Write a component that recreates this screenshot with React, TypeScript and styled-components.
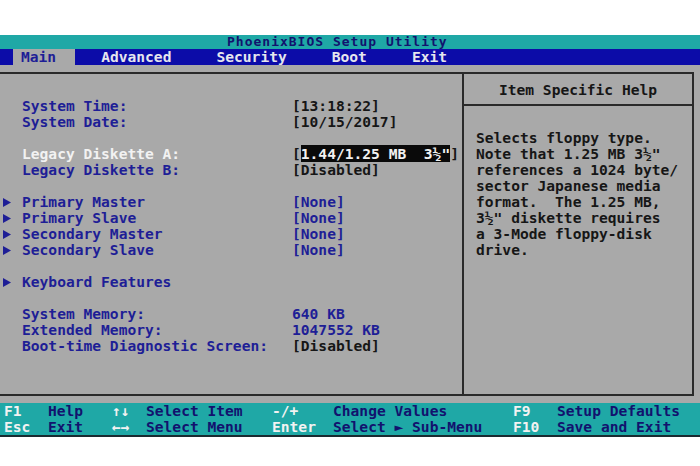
import React from 'react';
import styled, { createGlobalStyle } from 'styled-components';

const colors = {
  teal: '#1fa8a6',
  blue: '#0c0ca8',
  gray: '#a9a9a9',
  line: '#2a2a2a',
  label: '#1e1e96',
  white: '#f2f2f2',
  black: '#161616',
  title: '#12126e',
};

type Tone = 'black' | 'blue';

interface Item {
  label: string;
  value?: string;
  tone?: Tone;
  sub?: boolean;
  selected?: boolean;
}

const items: (Item | null)[] = [
  { label: 'System Time:', value: '[13:18:22]', tone: 'black' },
  { label: 'System Date:', value: '[10/15/2017]', tone: 'black' },
  null,
  { label: 'Legacy Diskette A:', selected: true },
  { label: 'Legacy Diskette B:', value: '[Disabled]', tone: 'black' },
  null,
  { label: 'Primary Master', value: '[None]', tone: 'blue', sub: true },
  { label: 'Primary Slave', value: '[None]', tone: 'blue', sub: true },
  { label: 'Secondary Master', value: '[None]', tone: 'blue', sub: true },
  { label: 'Secondary Slave', value: '[None]', tone: 'blue', sub: true },
  null,
  { label: 'Keyboard Features', sub: true },
  null,
  { label: 'System Memory:', value: '640 KB', tone: 'blue' },
  { label: 'Extended Memory:', value: '1047552 KB', tone: 'blue' },
  { label: 'Boot-time Diagnostic Screen:', value: '[Disabled]', tone: 'black' },
];

const tabs = ['Main', 'Advanced', 'Security', 'Boot', 'Exit'];

const helpLines = [
  'Selects floppy type.',
  'Note that 1.25 MB 3½"',
  'references a 1024 byte/',
  'sector Japanese media',
  'format.  The 1.25 MB,',
  '3½" diskette requires',
  'a 3-Mode floppy-disk',
  'drive.',
];

const keyRows = [
  ['F1', 'Help', '↑↓', 'Select Item', '-/+', 'Change Values', 'F9', 'Setup Defaults'],
  ['Esc', 'Exit', '←→', 'Select Menu', 'Enter', 'Select ► Sub-Menu', 'F10', 'Save and Exit'],
];

const SubArrow: React.FC = () => (
  <svg width="8" height="9" viewBox="0 0 8 9">
    <polygon points="0,0 8,4.5 0,9" fill={colors.label} />
  </svg>
);

const App: React.FC = () => {
  return (
    <Page>
      <GlobalStyle />
      <TitleBar>PhoenixBIOS Setup Utility</TitleBar>
      <MenuBar>
        {tabs.map((t, i) => (
          <MenuTab key={t} $active={i === 0}>{t}</MenuTab>
        ))}
      </MenuBar>
      <Body>
        <Frame>
          <LeftPanel>
            {items.map((item, i) =>
              item ? (
                <Row key={i}>
                  <Arrow>{item.sub && <SubArrow />}</Arrow>
                  <Label $selected={item.selected}>{item.label}</Label>
                  {item.selected ? (
                    <Value $tone="black">
                      [<Highlight>1.44/1.25 MB  3½"</Highlight>]
                    </Value>
                  ) : (
                    <Value $tone={item.tone ?? 'black'}>{item.value}</Value>
                  )}
                </Row>
              ) : (
                <Row key={i} />
              )
            )}
          </LeftPanel>
          <RightPanel>
            <HelpHeader>Item Specific Help</HelpHeader>
            <HelpText>
              {helpLines.map((l) => (
                <HelpLine key={l}>{l}</HelpLine>
              ))}
            </HelpText>
          </RightPanel>
        </Frame>
      </Body>
      <KeyBar>
        {keyRows.map((r) =>
          r.map((cell, j) => (
            <KeyCell key={r[0] + j} $key={j % 2 === 0}>
              {cell}
            </KeyCell>
          ))
        )}
      </KeyBar>
    </Page>
  );
};

const GlobalStyle = createGlobalStyle`
  html, body {
    margin: 0;
    padding: 0;
    background: #ffffff;
  }
  body {
    font-family: "DejaVu Sans Mono", "Liberation Mono", monospace;
    font-size: 14.6px;
    font-weight: 700;
  }
`;

const Page = styled.div`
  width: 700px;
  padding-top: 35px;
`;

const TitleBar = styled.div`
  height: 14px;
  line-height: 14px;
  font-size: 13px;
  letter-spacing: 1px;
  padding-left: 227px;
  background: ${colors.teal};
  color: ${colors.title};
  white-space: pre;
`;

const MenuBar = styled.div`
  display: flex;
  gap: 18px;
  height: 16px;
  padding-left: 13px;
  background: ${colors.blue};
`;

const MenuTab = styled.div<{ $active?: boolean }>`
  padding: 0 19px 0 8px;
  line-height: 16px;
  background: ${({ $active }) => ($active ? colors.gray : 'transparent')};
  color: ${({ $active }) => ($active ? colors.label : '#e6e6ee')};
`;

const Body = styled.div`
  background: ${colors.gray};
  padding: 7px 6px 7px 0;
`;

const Frame = styled.div`
  display: flex;
  height: 324px;
  box-sizing: border-box;
  border: 2px solid ${colors.line};
  border-left: none;
`;

const LeftPanel = styled.div`
  width: 462px;
  padding-top: 24px;
  border-right: 2px solid ${colors.line};
`;

const Row = styled.div`
  display: grid;
  grid-template-columns: 19px 270px 1fr;
  height: 16px;
  line-height: 16px;
  padding-left: 3px;
  white-space: pre;
`;

const Arrow = styled.span`
  display: flex;
  align-items: center;
`;

const Label = styled.span<{ $selected?: boolean }>`
  color: ${({ $selected }) => ($selected ? colors.white : colors.label)};
`;

const Value = styled.span<{ $tone: Tone }>`
  color: ${({ $tone }) => ($tone === 'blue' ? colors.label : colors.black)};
`;

const Highlight = styled.span`
  background: #0a0a0a;
  color: ${colors.white};
`;

const RightPanel = styled.div`
  flex: 1;
  display: flex;
  flex-direction: column;
`;

const HelpHeader = styled.div`
  height: 22px;
  padding-top: 8px;
  line-height: 16px;
  text-align: center;
  color: ${colors.black};
  border-bottom: 2px solid ${colors.line};
`;

const HelpText = styled.div`
  padding: 24px 0 0 12px;
  color: ${colors.black};
`;

const HelpLine = styled.div`
  height: 16px;
  line-height: 16px;
  white-space: pre;
`;

const KeyBar = styled.div`
  display: grid;
  grid-template-columns: 44px 64px 34px 126px 61px 180px 44px 1fr;
  grid-auto-rows: 16px;
  padding-left: 4px;
  background: ${colors.teal};
  border-bottom: 2px solid #1a2a30;
`;

const KeyCell = styled.span<{ $key: boolean }>`
  line-height: 16px;
  white-space: pre;
  color: ${({ $key }) => ($key ? colors.white : colors.title)};
`;

export default App;
